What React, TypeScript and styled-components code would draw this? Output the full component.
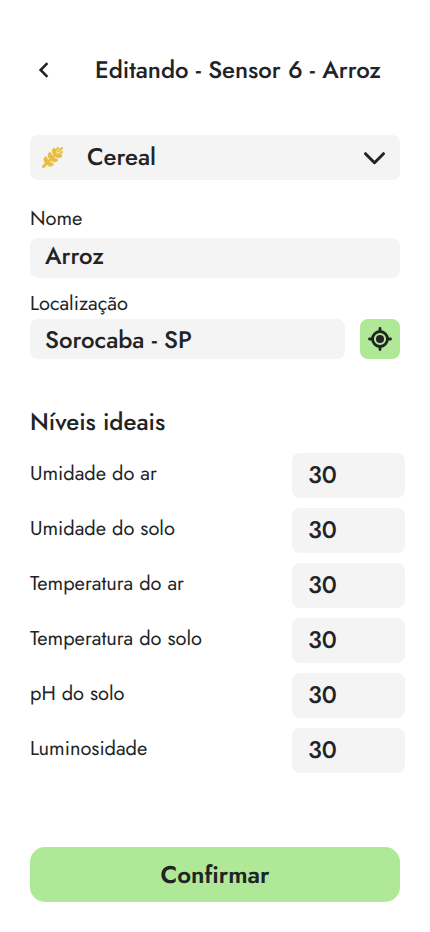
import React from 'react';
import styled, { createGlobalStyle } from 'styled-components';
import { FaWheatAwn } from 'react-icons/fa6';

const GlobalStyle = createGlobalStyle`
  * { box-sizing: border-box; }
  body {
    margin: 0;
    background: #fff;
    color: #212325;
    font-family: Jost, Lato, sans-serif;
    text-rendering: geometricPrecision;
    -webkit-font-smoothing: antialiased;
  }
  button { font: inherit; color: inherit; border: 0; text-rendering: inherit; }
`;

const Screen = styled.main`
  width: 430px;
  height: 932px;
  padding: 49px 30px 30px;
  display: flex;
  flex-direction: column;
`;

const Header = styled.header`
  display: flex;
  align-items: center;
  height: 40px;
  margin-bottom: 46px;
`;

const BackButton = styled.button`
  width: 65px;
  height: 40px;
  padding: 2px 0 0 8px;
  background: none;
  display: flex;
  align-items: center;
`;

const Title = styled.h1`
  margin: 0;
  font-size: 24px;
  line-height: 35px;
  font-weight: 500;
  white-space: nowrap;
`;

const SectionTitle = styled(Title).attrs({ as: 'h2' })`
  margin-bottom: 14px;
`;

const Select = styled.button`
  height: 45px;
  padding: 0 14px 0 12px;
  border-radius: 8px;
  background: #f4f4f4;
  display: flex;
  align-items: center;
  margin-bottom: 24px;
  text-align: left;
`;

const SelectText = styled.span`
  flex: 1;
  margin-left: 24px;
  padding-bottom: 2px;
  font-size: 24px;
  line-height: 35px;
  font-weight: 500;
`;

const ChevronDown = styled.svg`
  margin-top: 2px;
`;

const Label = styled.label`
  font-size: 20px;
  line-height: 29px;
  white-space: nowrap;
`;

const FieldRow = styled.div<{ $top: number; $bottom: number }>`
  display: flex;
  gap: 15px;
  margin-top: ${(p) => p.$top}px;
  margin-bottom: ${(p) => p.$bottom}px;
`;

const Field = styled.div<{ $inset: number }>`
  flex: 1;
  height: 40px;
  padding: ${(p) => p.$inset}px 15px 0;
  border-radius: 8px;
  background: #f4f4f4;
  font-size: 24px;
  line-height: 35px;
  font-weight: 500;
`;

const LocateButton = styled.button`
  width: 40px;
  height: 40px;
  padding: 0;
  border-radius: 8px;
  background: #afe998;
  display: grid;
  place-items: center;
`;

const Levels = styled.section`
  margin-right: -5px;
`;

const LevelRow = styled.div`
  display: flex;
  justify-content: space-between;
  height: 45px;
  margin-bottom: 10px;
`;

const LevelLabel = styled(Label)`
  margin-top: 6px;
`;

const LevelValue = styled.div`
  width: 113px;
  height: 45px;
  padding: 4px 16px;
  border-radius: 8px;
  background: #f4f4f4;
  font-size: 24px;
  line-height: 35px;
  font-weight: 500;
`;

const Confirm = styled.button`
  height: 55px;
  margin-top: auto;
  border-radius: 15px;
  background: #afe998;
  font-size: 24px;
  font-weight: 600;
`;

const levels = [
  'Umidade do ar',
  'Umidade do solo',
  'Temperatura do ar',
  'Temperatura do solo',
  'pH do solo',
  'Luminosidade',
];

export default function App() {
  return (
    <>
      <GlobalStyle />
      <Screen>
        <Header>
          <BackButton aria-label="Voltar">
            <svg width="11" height="16" viewBox="0 0 11 16" fill="none" stroke="#212325" strokeWidth="2.5">
              <path d="M9.4 1.2 2.6 8l6.800 6.800" />
            </svg>
          </BackButton>
          <Title>Editando - Sensor 6 - Arroz</Title>
        </Header>
        <Select>
          <FaWheatAwn size={21} color="#e8be42" stroke="#e8be42" strokeWidth={7} />
          <SelectText>Cereal</SelectText>
          <ChevronDown width="23" height="15" viewBox="0 0 23 15" fill="none" stroke="#212325" strokeWidth="3" strokeLinecap="round" strokeLinejoin="round">
            <path d="m2.500 2.700 9 9 9-9" />
          </ChevronDown>
        </Select>
        <Label>Nome</Label>
        <FieldRow $top={5} $bottom={11}>
          <Field $inset={0}>Arroz</Field>
        </FieldRow>
        <Label>Localização</Label>
        <FieldRow $top={1} $bottom={45}>
          <Field $inset={3}>Sorocaba - SP</Field>
          <LocateButton aria-label="Usar localização atual">
            <svg width="24" height="24" viewBox="0 0 24 24" fill="none" stroke="#212325" strokeWidth="2.8" strokeLinecap="round">
              <circle cx="12" cy="12" r="7.5" />
              <circle cx="12" cy="12" r="4" fill="#212325" stroke="none" />
              <path d="M12 1.500v3M12 19.500v3M1.500 12h3M19.500 12h3" />
            </svg>
          </LocateButton>
        </FieldRow>
        <Levels>
          <SectionTitle>Níveis ideais</SectionTitle>
          {levels.map((name) => (
            <LevelRow key={name}>
              <LevelLabel>{name}</LevelLabel>
              <LevelValue>30</LevelValue>
            </LevelRow>
          ))}
        </Levels>
        <Confirm>Confirmar</Confirm>
      </Screen>
    </>
  );
}
